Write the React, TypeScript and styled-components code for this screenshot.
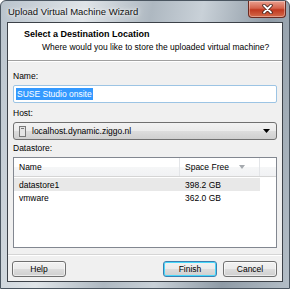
import React from 'react'
import styled, { createGlobalStyle } from 'styled-components'

const GlobalStyle = createGlobalStyle`
  html, body {
    margin: 0;
    padding: 0;
    background: #ffffff;
  }
  * {
    box-sizing: border-box;
  }
`

const Window = styled.div`
  width: 290px;
  height: 289px;
  display: flex;
  flex-direction: column;
  padding: 0 6px 6px 6px;
  font-family: 'Liberation Sans', Arial, sans-serif;
  font-size: 8.5px;
  color: #000;
  background: linear-gradient(100deg, #b9c3cc 0%, #dfe4e8 25%, #aeb8c1 45%, #c9d1d8 60%, #8f9ba6 80%, #b4bec7 100%);
  border: 1px solid #4a5560;
  border-radius: 6px 6px 0 0;
`

const TitleBar = styled.div`
  height: 21px;
  display: flex;
  align-items: center;
  padding-left: 1px;
`

const Title = styled.span`
  font-size: 9.5px;
  color: #111;
  text-shadow: 0 0 6px rgba(255, 255, 255, 0.9), 0 0 3px rgba(255, 255, 255, 0.9);
`

const CloseButton = styled.div`
  margin-left: auto;
  margin-right: -3px;
  align-self: flex-start;
  width: 38px;
  height: 17px;
  display: flex;
  align-items: center;
  justify-content: center;
  border: 1px solid #6b2a20;
  border-top: none;
  border-radius: 0 0 4px 4px;
  background: linear-gradient(180deg, #e9a08f 0%, #d4634c 45%, #c0391f 55%, #d46a4a 100%);
  box-shadow: inset 0 0 0 1px rgba(255, 255, 255, 0.35);
`

const Client = styled.div`
  flex: 1;
  display: flex;
  flex-direction: column;
  border: 1px solid #3c4148;
  background: #f0f0f0;
`

const Header = styled.div`
  height: 38px;
  background: #ffffff;
  border-bottom: 1px solid #a0a0a0;
  box-shadow: 0 1px 0 #ffffff;
  padding: 5px 0 0 16px;
`

const HeaderTitle = styled.div`
  font-weight: bold;
  font-size: 9px;
  line-height: 12px;
`

const HeaderSub = styled.div`
  padding-left: 18px;
  line-height: 14px;
`

const Body = styled.div`
  flex: 1;
  display: flex;
  flex-direction: column;
  padding: 9px 6px 0 5px;
`

const Label = styled.div`
  line-height: 13px;
  margin-bottom: 2px;
`

const TextBox = styled.div`
  height: 18px;
  width: 264px;
  border: 1px solid #9cc4e4;
  border-radius: 2px;
  background: #fff;
  display: flex;
  align-items: center;
  padding-left: 2px;
  margin-bottom: 4px;
`

const Selected = styled.span`
  background: #3399ff;
  color: #fff;
  line-height: 12px;
  padding: 0 1px;
`

const Combo = styled.div`
  height: 18px;
  width: 264px;
  border: 1px solid #707070;
  border-radius: 3px;
  background: linear-gradient(180deg, #f2f2f2 0%, #ebebeb 49%, #dddddd 50%, #cfcfcf 100%);
  display: flex;
  align-items: center;
  padding: 0 6px 0 5px;
  margin-bottom: 2px;
`

const ComboText = styled.span`
  flex: 1;
  margin-left: 6px;
`

const ListBox = styled.div`
  width: 264px;
  height: 91px;
  border: 1px solid #828790;
  background: #fff;
  display: flex;
  flex-direction: column;
`

const Row = styled.div<{ $header?: boolean }>`
  display: grid;
  grid-template-columns: 166px 80px 1fr;
  height: ${p => (p.$header ? '19px' : '13px')};
  align-items: center;
  ${p =>
    p.$header &&
    `
    background: linear-gradient(180deg, #ffffff 0%, #ffffff 50%, #f5f6f7 51%, #f1f2f4 100%);
    border-bottom: 1px solid #d5d5d5;
    margin-bottom: 1px;
  `}
`

const Cell = styled.div<{ $header?: boolean; $selected?: boolean; $last?: boolean }>`
  height: 100%;
  display: flex;
  align-items: center;
  padding-left: 5px;
  ${p => p.$header && !p.$last && 'border-right: 1px solid #e3e5e8;'}
  ${p => p.$selected && !p.$last && 'background: #e8e8e8;'}
`

const SortArrow = styled.span`
  margin-left: auto;
  margin-right: 14px;
  width: 0;
  height: 0;
  border-left: 3.5px solid transparent;
  border-right: 3.5px solid transparent;
  border-top: 4px solid #a5a9ae;
`

const Footer = styled.div`
  height: 27px;
  border-top: 1px solid #d5d5d5;
  box-shadow: inset 0 1px 0 #ffffff;
  display: flex;
  align-items: center;
  padding: 2px 5px 0 4px;
  gap: 6px;
`

const Button = styled.div<{ $default?: boolean; $push?: boolean }>`
  width: 54px;
  height: 16px;
  display: flex;
  align-items: center;
  justify-content: center;
  border: 1px solid ${p => (p.$default ? '#3c7fb1' : '#707070')};
  border-radius: 3px;
  background: linear-gradient(180deg, #f2f2f2 0%, #ebebeb 49%, #dddddd 50%, #cfcfcf 100%);
  box-shadow: inset 0 0 0 1px ${p => (p.$default ? '#48d8fb' : 'rgba(255,255,255,0.6)')};
  ${p => p.$push && 'margin-left: auto;'}
`

const HostIcon = () => (
  <svg width="7" height="11" viewBox="0 0 7 11">
    <rect x="0.5" y="0.5" width="6" height="10" fill="#e4e4e4" stroke="#7a7a7a" />
    <rect x="2" y="2" width="3" height="1" fill="#7a7a7a" />
  </svg>
)

const CloseIcon = () => (
  <svg width="11" height="10" viewBox="0 0 11 10">
    <path d="M2 1.5 L9 8.5 M9 1.5 L2 8.5" stroke="#3a1a14" strokeWidth="3.4" strokeLinecap="round" />
    <path d="M2 1.5 L9 8.5 M9 1.5 L2 8.5" stroke="#ffffff" strokeWidth="1.8" strokeLinecap="round" />
  </svg>
)

const DropArrow = () => (
  <svg width="7" height="4" viewBox="0 0 7 4">
    <path d="M0 0 H7 L3.5 4 Z" fill="#000" />
  </svg>
)

const datastores = [
  { name: 'datastore1', free: '398.2 GB' },
  { name: 'vmware', free: '362.0 GB' },
]

const App = () => (
  <>
    <GlobalStyle />
    <Window>
      <TitleBar>
        <Title>Upload Virtual Machine Wizard</Title>
        <CloseButton>
          <CloseIcon />
        </CloseButton>
      </TitleBar>
      <Client>
        <Header>
          <HeaderTitle>Select a Destination Location</HeaderTitle>
          <HeaderSub>Where would you like to store the uploaded virtual machine?</HeaderSub>
        </Header>
        <Body>
          <Label>Name:</Label>
          <TextBox>
            <Selected>SUSE Studio onsite</Selected>
          </TextBox>
          <Label>Host:</Label>
          <Combo>
            <HostIcon />
            <ComboText>localhost.dynamic.ziggo.nl</ComboText>
            <DropArrow />
          </Combo>
          <Label>Datastore:</Label>
          <ListBox>
            <Row $header>
              <Cell $header>Name</Cell>
              <Cell $header>
                Space Free
                <SortArrow />
              </Cell>
              <Cell $header $last />
            </Row>
            {datastores.map((d, i) => (
              <Row key={d.name}>
                <Cell $selected={i === 0}>{d.name}</Cell>
                <Cell $selected={i === 0}>{d.free}</Cell>
                <Cell $last />
              </Row>
            ))}
          </ListBox>
        </Body>
        <Footer>
          <Button>Help</Button>
          <Button $default $push>
            Finish
          </Button>
          <Button>Cancel</Button>
        </Footer>
      </Client>
    </Window>
  </>
)

export default App
